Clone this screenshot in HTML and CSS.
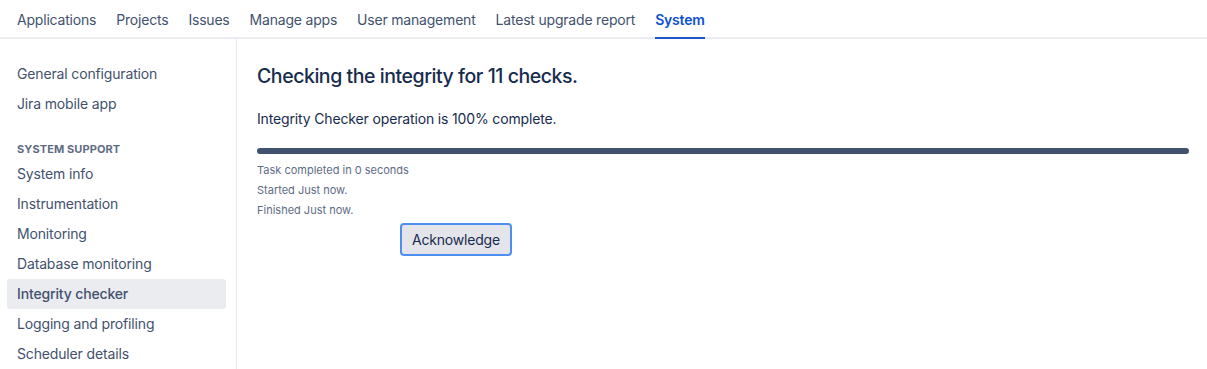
FILE: index.html
```html
<!DOCTYPE html>
<html lang="en">
<head>
  <meta charset="UTF-8">
  <title>Integrity checker</title>
  <link rel="stylesheet" href="styles.css">
</head>
<body>

  <div class="top-nav">
    <a class="nav-item">Applications</a>
    <a class="nav-item">Projects</a>
    <a class="nav-item">Issues</a>
    <a class="nav-item">Manage apps</a>
    <a class="nav-item">User management</a>
    <a class="nav-item">Latest upgrade report</a>
    <a class="nav-item active">System</a>
  </div>

  <div class="page">
    <div class="sidebar">
      <div class="side-item">General configuration</div>
      <div class="side-item">Jira mobile app</div>

      <div class="side-heading">SYSTEM SUPPORT</div>
      <div class="side-item">System info</div>
      <div class="side-item">Instrumentation</div>
      <div class="side-item">Monitoring</div>
      <div class="side-item">Database monitoring</div>
      <div class="side-item selected">Integrity checker</div>
      <div class="side-item">Logging and profiling</div>
      <div class="side-item">Scheduler details</div>
    </div>

    <div class="content">
      <h1>Checking the integrity for 11 checks.</h1>
      <p class="status">Integrity Checker operation is 100% complete.</p>

      <div class="progress"><div class="progress-fill" style="width: 100%"></div></div>

      <div class="task-info">
        <div>Task completed in 0 seconds</div>
        <div>Started Just now.</div>
        <div>Finished Just now.</div>
      </div>

      <button class="ack-button">Acknowledge</button>
    </div>
  </div>

</body>
</html>
```

FILE: styles.css
```css
body {
  margin: 0;
  padding: 0;
  font-family: Inter, "Noto Sans", sans-serif;
  font-size: 14px;
  letter-spacing: -0.15px;
  color: #172b4d;
  background: white;
}

.top-nav {
  display: flex;
  gap: 20px;
  height: 37px;
  padding: 0 17px;
  border-bottom: 2px solid #ebecf0;
  letter-spacing: -0.2px;
}

.nav-item {
  display: flex;
  align-items: center;
  height: 37px;
  padding-top: 2px;
  box-sizing: border-box;
  color: #42526e;
  font-size: 14px;
  cursor: pointer;
  position: relative;
}

.nav-item.active {
  color: #0c52cc;
  font-weight: 600;
}

/* blue bar under the current tab */
.nav-item.active::after {
  content: "";
  position: absolute;
  left: 0;
  right: 0;
  bottom: -2px;
  height: 2px;
  background: #1f55cc;
}

.page {
  display: flex;
}

.sidebar {
  width: 237px;
  min-height: 330px;
  box-sizing: border-box;
  border-right: 1px solid #e8e9ed;
  padding: 20px 10px 0 7px;
}

.side-item {
  height: 30px;
  line-height: 30px;
  padding-left: 10px;
  color: #42526e;
  font-size: 14px;
  border-radius: 3px;
}

.side-item.selected {
  background: #ebecf0;
  font-weight: 500;
}

.side-heading {
  margin-top: 23px;
  margin-bottom: 2px;
  padding-left: 10px;
  font-size: 11px;
  font-weight: 700;
  color: #5e6c84;
  letter-spacing: 0.1px;
  height: 15px;
  line-height: 15px;
}

.content {
  flex: 1;
  padding: 22px 18px 0 20px;
}

h1 {
  margin: 0;
  font-size: 19.5px;
  font-weight: 500;
  letter-spacing: -0.45px;
  color: #172b4d;
  line-height: 30px;
}

.status {
  margin: 18px 0 0 0;
  line-height: 20px;
  color: #172b4d;
}

.progress {
  margin-top: 19px;
  height: 6px;
  background: #dfe1e6;
  border-radius: 3px;
}

.progress-fill {
  height: 100%;
  background: #42526e;
  border-radius: 3px;
}

.task-info {
  margin-top: 6px;
  font-size: 11px;
  letter-spacing: 0;
  color: #5e6c84;
  line-height: 20px;
}

.ack-button {
  margin: 3px 0 0 143px;
  padding: 0 10px;
  height: 33px;
  font-family: inherit;
  font-size: 14px;
  letter-spacing: -0.2px;
  color: #172b4d;
  background: #e4e5ea;
  border: 2px solid #4c8ff0;
  border-radius: 4px;
  cursor: pointer;
}
```
